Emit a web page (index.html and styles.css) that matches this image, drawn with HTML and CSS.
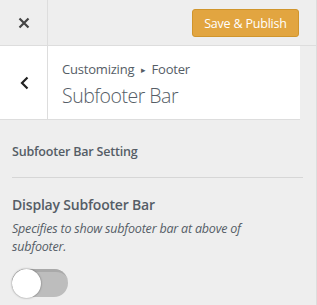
FILE: index.html
```html
<!DOCTYPE html>
<html lang="en">
  <head>
    <meta charset="UTF-8" />
    <meta name="viewport" content="width=device-width, initial-scale=1.0" />
    <title>Customizing Footer</title>
    <link rel="stylesheet" href="styles.css">
  </head>
  <body>
    <div class="sidebar">
      <div class="topbar">
        <button class="btn-close" aria-label="Close">
          <svg width="12" height="12" viewBox="0 0 12 12">
            <path d="M1.5 1.5 L10.5 10.5 M10.5 1.5 L1.5 10.5" stroke="#444" stroke-width="2.2" fill="none" />
          </svg>
        </button>
        <div class="topbar-actions">
          <button class="btn-publish">Save &amp; Publish</button>
        </div>
      </div>

      <div class="section-head">
        <button class="btn-back" aria-label="Back">
          <svg width="9" height="14" viewBox="0 0 9 14">
            <path d="M7.5 1.5 L2 7 L7.5 12.5" stroke="#222" stroke-width="2.2" fill="none" />
          </svg>
        </button>
        <div class="section-title">
          <div class="crumb">Customizing <span class="crumb-sep">&#9656;</span> Footer</div>
          <div class="title">Subfooter Bar</div>
        </div>
      </div>

      <div class="controls">
        <div class="group-title">Subfooter Bar Setting</div>
        <div class="control">
          <div class="control-label">Display Subfooter Bar</div>
          <div class="control-desc">Specifies to show subfooter bar at above of subfooter.</div>
          <label class="toggle">
            <span class="toggle-knob"></span>
          </label>
        </div>
      </div>
    </div>
  </body>
</html>
```

FILE: styles.css
```css
body {
  margin: 0;
  padding: 0;
  background-color: #eeeeee;
  font-family: "Open Sans", "Liberation Sans", sans-serif;
  color: #555d66;
}

.sidebar {
  width: 317px;
  height: 305px;
  overflow: hidden;
  border-right: 1px solid #dddddd;
  box-sizing: border-box;
}

.topbar {
  display: flex;
  height: 45px;
  border-bottom: 1px solid #dddddd;
}

.btn-close {
  width: 48px;
  border: none;
  border-right: 1px solid #dddddd;
  background: transparent;
  display: flex;
  align-items: center;
  justify-content: center;
  padding: 0;
}

.topbar-actions {
  flex: 1;
  display: flex;
  align-items: center;
  justify-content: flex-end;
  padding-right: 17px;
}

.btn-publish {
  height: 28px;
  width: 107px;
  background-color: #e2a540;
  border: 1px solid #d0952c;
  border-radius: 3px;
  color: #ffffff;
  font-family: inherit;
  font-size: 12.5px;
  letter-spacing: -0.2px;
  padding: 0;
  margin-top: 1px;
}

.section-head {
  display: flex;
  width: 300px;
  height: 73px;
  background-color: #ffffff;
  border-bottom: 1px solid #dddddd;
}

.btn-back {
  width: 48px;
  border: none;
  border-right: 1px solid #dddddd;
  background: transparent;
  display: flex;
  align-items: center;
  justify-content: center;
  padding: 0 0 0 1px;
}

.section-title {
  padding: 14px 0 0 14px;
}

.crumb {
  font-size: 13px;
  letter-spacing: -0.2px;
  line-height: 18px;
}

.crumb-sep {
  font-size: 9px;
  margin: 0 3px;
  position: relative;
  top: -1px;
}

.title {
  font-size: 19.5px;
  font-weight: 300;
  letter-spacing: -0.5px;
  line-height: 28px;
  margin-top: 2px;
}

.controls {
  padding: 22px 13px 0 12px;
}

.group-title {
  font-size: 12.5px;
  font-weight: 600;
  letter-spacing: -0.2px;
  line-height: 20px;
  padding-bottom: 15px;
  border-bottom: 1px solid #d6d6d6;
}

.control {
  padding-top: 17px;
}

.control-label {
  font-size: 14px;
  font-weight: 600;
  letter-spacing: -0.2px;
  line-height: 20px;
}

.control-desc {
  font-size: 12.5px;
  font-style: italic;
  letter-spacing: -0.2px;
  line-height: 18px;
  margin-top: 5px;
  padding-right: 40px;
}

.toggle {
  display: block;
  margin-top: 13px;
  width: 56px;
  height: 28px;
  border-radius: 14px;
  background-color: #bdbdbd;
  box-shadow: inset 2px 3px 0 #a9a9a9;
  position: relative;
}

.toggle-knob {
  position: absolute;
  left: 0;
  top: 0;
  width: 29px;
  height: 29px;
  border-radius: 50%;
  background-color: #ffffff;
  box-shadow: 0 0 2px rgba(0, 0, 0, 0.5);
}
```
